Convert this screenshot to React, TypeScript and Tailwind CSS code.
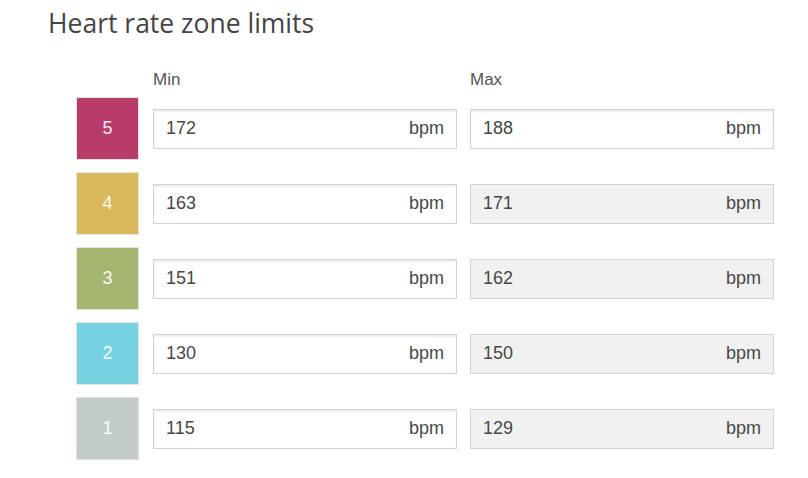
import React from "react";

const zones = [
  { n: 5, color: "bg-[#b93b6a]", min: 172, max: 188, maxEditable: true },
  { n: 4, color: "bg-[#d9b95b]", min: 163, max: 171, maxEditable: false },
  { n: 3, color: "bg-[#a4b56f]", min: 151, max: 162, maxEditable: false },
  { n: 2, color: "bg-[#75d3e1]", min: 130, max: 150, maxEditable: false },
  { n: 1, color: "bg-[#c3caca]", min: 115, max: 129, maxEditable: false },
];

function Field({ value, disabled }: { value: number; disabled?: boolean }) {
  return (
    <div
      className={
        "flex h-[40px] w-[304px] items-center justify-between border border-[#d2d2d2] pl-[12px] pr-[12px] text-[18px] text-[#474747] " +
        (disabled ? "bg-[#f1f1f1]" : "bg-white shadow-[inset_0_2px_2px_rgba(0,0,0,0.08)]")
      }
    >
      <span>{value}</span>
      <span>bpm</span>
    </div>
  );
}

export default function App() {
  return (
    <div
      className="min-h-[478px] w-[808px] bg-white"
      style={{ fontFamily: '"Liberation Sans", Arial, sans-serif' }}
    >
      <h1
        className="pl-[48px] pt-[6px] text-[26.5px] leading-[34px] text-[#444]"
        style={{ fontFamily: '"Open Sans", sans-serif' }}
      >
        Heart rate zone limits
      </h1>
      <div className="pl-[76px] pt-[31px]">
        <div className="flex h-[18px] items-center pl-[77px] text-[17px] text-[#555]">
          <span className="w-[317px]">Min</span>
          <span>Max</span>
        </div>
        <div className="mt-[8px] flex flex-col gap-[12px]">
          {zones.map((z) => (
            <div key={z.n} className="flex items-center">
              <div
                className={
                  "flex h-[63px] w-[63px] items-center justify-center border border-[#e3e3e3] text-[18px] text-white/90 " +
                  z.color
                }
              >
                {z.n}
              </div>
              <div className="ml-[14px]">
                <Field value={z.min} />
              </div>
              <div className="ml-[13px]">
                <Field value={z.max} disabled={!z.maxEditable} />
              </div>
            </div>
          ))}
        </div>
      </div>
    </div>
  );
}
